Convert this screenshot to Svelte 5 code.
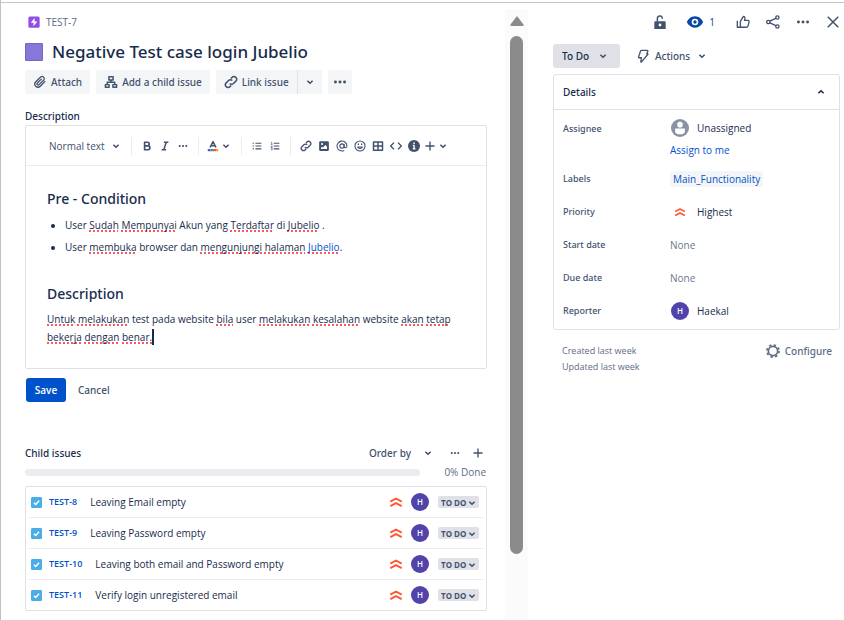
<script>
  const icons = {
    chevron: '<path d="M5 6.5 8 9.5 11 6.5" stroke-width="1.8"/>',
    chevronUp: '<path d="M5 9.5 8 6.5 11 9.5" stroke-width="1.8"/>',
    clip: '<path d="M14 7 8.300 12.900a3.600 3.600 0 0 1-5.100-5.100l5.600-5.600a2.500 2.500 0 0 1 3.500 3.500L7 11a1.300 1.300 0 0 1-1.900-1.900L9.800 4.400"/>',
    tree: '<path d="M5.600 2h4.800v3.600H5.600zM1.600 11h4.200v3H1.600zM10.200 11h4.200v3h-4.200zM8 5.600v2.600M3.700 11V8.300h8.600V11" stroke-width="1.700"/>',
    link: '<path d="M6.500 9.700a3 3 0 0 0 4.300 0l2.700-2.700a3 3 0 0 0-4.300-4.300L7.800 4M9.500 6.300a3 3 0 0 0-4.300 0L2.500 9a3 3 0 0 0 4.300 4.300l1.400-1.300" stroke-width="1.700"/>',
    dots: '<g fill="currentColor" stroke="none"><circle cx="2.8" cy="8" r="1.7"/><circle cx="8" cy="8" r="1.7"/><circle cx="13.2" cy="8" r="1.7"/></g>',
    bold: '<path d="M4.8 3h3.8a2.4 2.4 0 0 1 0 4.8H4.8zM4.8 7.8h4.5a2.6 2.6 0 0 1 0 5.2H4.8z" stroke-width="2.2"/>',
    italic: '<path d="M6.5 3h6M3.5 13h6M9.6 3 6.4 13" stroke-width="2"/>',
    color: '<path d="M4 10 8 2.2 12 10M5.4 7.6h5.2" stroke-width="2"/><g stroke="none"><path fill="#6554c0" d="M1 12h3.5v3H1z"/><path fill="#00a3e0" d="M4.5 12H8v3H4.5z"/><path fill="#ff5630" d="M8 12h4v3H8z"/><path fill="#ff991f" d="M12 12h3v3h-3z"/></g>',
    bullets: '<path d="M5.5 3.5H15M5.5 8H15M5.5 12.5H15M1 3.5h2M1 8h2M1 12.5h2" stroke-width="1.8"/>',
    numbers: '<path d="M6 3.5h9M6 8h9M6 12.5h9" stroke-width="1.8"/><path d="M1.4 2.4 2.8 2v4M1.2 6h3M1.2 9h2.6L1.4 11h2.6L2.8 12.4c2 .2 1 2.4-1.6 1.6" stroke-width="1"/>',
    image: '<path fill="currentColor" stroke="none" fill-rule="evenodd" d="M3 1.500h10A1.500 1.500 0 0 1 14.500 3v10a1.500 1.500 0 0 1-1.500 1.500H3A1.500 1.500 0 0 1 1.500 13V3A1.500 1.500 0 0 1 3 1.500zM5.500 4a1.400 1.400 0 1 0 0 2.800 1.400 1.400 0 0 0 0-2.800zM4 12h8V8.800L9.800 6.500 6.500 10 5.300 9 4 10.300z"/>',
    mention: '<circle cx="8" cy="8" r="2.800"/><path d="M10.800 5.200v3.600c0 2.400 3.800 1.900 3.800-.8A6.600 6.600 0 1 0 11 13.900" stroke-width="1.400"/>',
    emoji: '<circle cx="8" cy="8" r="6.700"/><path d="M4.800 9.300c1 2.600 5.400 2.600 6.400 0z"/><path d="M5.800 4.800v1.700M10.200 4.800v1.700" stroke-width="1.700"/>',
    table: '<path d="M2 2.500h12v11H2zM2 8h12M8 2.500v11" stroke-width="2"/>',
    code: '<path d="M5.300 3.500.9 8l4.400 4.500M10.700 3.500 15.100 8l-4.400 4.500" stroke-width="1.900"/>',
    info: '<circle cx="8" cy="8" r="8" fill="currentColor" stroke="none"/><path d="M8 3.300v1.900M6.500 7.200h1.600v4.500M6.400 11.700h3.400" stroke="#fff" stroke-width="1.900"/>',
    plus: '<path d="M8 2v12M2 8h12" stroke-width="1.800"/>',
    lock: '<path d="M5 7.500V4a2.900 2.900 0 0 1 5.700-.6v1" stroke-width="1.700"/><path fill="currentColor" stroke="none" fill-rule="evenodd" d="M2.500 7h11a1 1 0 0 1 1 1v7a1 1 0 0 1-1 1h-11a1 1 0 0 1-1-1V8a1 1 0 0 1 1-1zM8 9.800a1.600 1.600 0 1 0 0 3.200 1.600 1.600 0 0 0 0-3.200z"/>',
    eye: '<path fill="currentColor" stroke="none" fill-rule="evenodd" d="M8 2.300c4 0 7 3.200 7.900 5.200.1.300.1.700 0 1C15 10.500 12 13.700 8 13.700S1 10.500.1 8.500a1.200 1.200 0 0 1 0-1C1 5.500 4 2.300 8 2.300zM8 4.700a3.300 3.300 0 1 0 0 6.600 3.300 3.300 0 0 0 0-6.600z"/><circle cx="8" cy="8" r="1.700" fill="currentColor" stroke="none"/>',
    thumb: '<path d="M5 14V7.300L8.500 1.500c2.400 0 1.800 2.500 1.200 4.700h3.700c1.200 0 1.800.9 1.500 2l-1.200 4.500c-.3.900-.9 1.300-1.700 1.300zM1.500 6.500V14H5"/>',
    share: '<circle cx="2.700" cy="8" r="1.900"/><circle cx="13" cy="2.900" r="1.900"/><circle cx="13" cy="13.100" r="1.900"/><path d="m4.500 7.100 6.700-3.300M4.500 8.900l6.700 3.300"/>',
    close: '<path d="m2 2 12 12M14 2 2 14" stroke-width="1.700"/>',
    bolt: '<path d="M6.300 1.500h6.500q1 0 .7 1L12.300 5.400h.7q1 0 .4.900L6.300 14.800q-.9.700-.8-.5L6.200 10H3.700q-1 0-.7-1L5.200 2.300q.3-.8 1.100-.8z"/>',
    highest: '<path d="m1.500 7.500 6.500-3.500 6.500 3.500M1.500 12.700 8 9.200l6.500 3.500" stroke="#ff5630" stroke-width="2.200"/>',
    gear: '<circle cx="8" cy="8" r="5.300" stroke-width="1.900"/><circle cx="8" cy="8" r="7" stroke-width="1.800" stroke-dasharray="2.749 2.749" stroke-linecap="butt"/>',
    epic: '<rect x=".5" y=".5" width="15" height="15" rx="2" fill="#904ee2" stroke="none"/><path fill="#fff" stroke="none" d="M8.800 2.800v4.400h3.600L7.300 13.500V9H3.700z"/>',
    task: '<rect width="16" height="16" rx="2" fill="#4bade8" stroke="none"/><path d="m4.300 8.300 2.500 2.500 5-5.300" stroke="#fff" stroke-width="2.200"/>',
    person: '<circle cx="8" cy="8" r="8" fill="#8993a4" stroke="none"/><circle cx="8" cy="5" r="2.500" fill="#fff" stroke="none"/><path fill="#fff" stroke="none" d="M3.700 8.500h8.600V11a4.300 2.500 0 0 1-8.600 0z"/>'
  };

  const inserts = ['link', 'image', 'mention', 'emoji', 'table', 'code', 'info'];

  const children = [
    { key: 'TEST-8', title: 'Leaving Email empty' },
    { key: 'TEST-9', title: 'Leaving Password empty' },
    { key: 'TEST-10', title: 'Leaving both email and Password empty' },
    { key: 'TEST-11', title: 'Verify login unregistered email' }
  ];
</script>

{#snippet icon(name, size = 14)}
  <svg class="icon" width={size} height={size} viewBox="0 0 16 16" fill="none" stroke="currentColor" stroke-width="1.5" stroke-linejoin="round" aria-hidden="true">{@html icons[name]}</svg>
{/snippet}

<div class="page">
  <main>
    <nav class="crumb">{@render icon('epic', 12)}<a href="#issue">TEST-7</a></nav>
    <h1><span class="swatch"></span>Negative Test case login Jubelio</h1>
    <div class="actions">
      <button class="soft">{@render icon('clip')}Attach</button>
      <button class="soft">{@render icon('tree')}Add a child issue</button>
      <div class="split">
        <button class="soft">{@render icon('link')}Link issue</button>
        <button class="soft arrow" aria-label="More link options">{@render icon('chevron')}</button>
      </div>
      <button class="soft square" aria-label="More">{@render icon('dots')}</button>
    </div>

    <h2 id="desc">Description</h2>
    <section class="editor">
      <div class="toolbar">
        <span class="pick style-pick">
          <select aria-label="Text style"><option>Normal text</option></select>
          {@render icon('chevron')}
        </span>
        <div class="group">
          <button aria-label="Bold">{@render icon('bold', 12)}</button>
          <button aria-label="Italic">{@render icon('italic', 12)}</button>
          <button aria-label="More formatting">{@render icon('dots', 10)}</button>
        </div>
        <div class="group tight">
          <button aria-label="Text color">{@render icon('color', 12)}{@render icon('chevron')}</button>
        </div>
        <div class="group">
          <button aria-label="Bullet list">{@render icon('bullets', 10)}</button>
          <button aria-label="Numbered list">{@render icon('numbers', 10)}</button>
        </div>
        <div class="group">
          {#each inserts as name}
            <button aria-label={name}>{@render icon(name, 12)}</button>
          {/each}
          <button class="add" aria-label="Insert">{@render icon('plus', 12)}{@render icon('chevron')}</button>
        </div>
      </div>
      <div class="text" role="textbox" aria-labelledby="desc" aria-multiline="true" contenteditable="true" spellcheck="false" tabindex="0">
        <h3>Pre - Condition</h3>
        <ul>
          <li>User <u>Sudah</u> <u>Mempunyai</u> Akun yang <u>Terdaftar</u> di <u>Jubelio</u> .</li>
          <li>User <u>membuka</u> browser dan <u>mengunjungi</u> <u>halaman</u> <a href="#jubelio"><u>Jubelio</u></a>.</li>
        </ul>
        <h3>Description</h3>
        <p><u>Untuk</u> <u>melakukan</u> test pada website <u>bila</u> user <u>melakukan</u> <u>kesalahan</u> website <u>akan</u> <u>tetap</u> <u>bekerja</u> <u>dengan</u> <u>benar.</u><span class="caret"></span></p>
      </div>
    </section>
    <div class="submit">
      <button class="save">Save</button>
      <button class="cancel">Cancel</button>
    </div>

    <header class="child-head">
      <h2>Child issues</h2>
      <span class="pick order">
        <select aria-label="Order"><option>Order by</option></select>
        {@render icon('chevron')}
      </span>
      <button aria-label="Child issue options">{@render icon('dots', 10)}</button>
      <button aria-label="Create child issue">{@render icon('plus', 12)}</button>
    </header>
    <div class="progress"><div class="bar" role="progressbar" aria-label="Done" aria-valuenow="0"></div><span>0% Done</span></div>
    <ul class="children">
      {#each children as item}
        <li>
          {@render icon('task', 11)}
          <a href={'#' + item.key}>{item.key}</a>
          <span class="name">{item.title}</span>
          {@render icon('highest')}
          <span class="avatar">H</span>
          <span class="pick status">
            <select aria-label={'Status of ' + item.key}><option>TO DO</option></select>
            {@render icon('chevron')}
          </span>
        </li>
      {/each}
    </ul>
  </main>

  <div class="scroll" aria-hidden="true">
    <svg width="14" height="10" viewBox="0 0 14 10"><path fill="#8b8b8b" d="M7 0 13.500 8.500Q14 10 12.500 10H1.500Q0 10 .5 8.500z"/></svg>
    <div class="thumb"></div>
  </div>

  <aside>
    <div class="tools">
      <button aria-label="Unlock">{@render icon('lock')}</button>
      <button class="watch" aria-label="Watchers">{@render icon('eye', 16)}<span>1</span></button>
      <button aria-label="Vote">{@render icon('thumb')}</button>
      <button aria-label="Share">{@render icon('share')}</button>
      <button aria-label="More">{@render icon('dots')}</button>
      <button aria-label="Close">{@render icon('close')}</button>
    </div>
    <div class="state">
      <span class="pick todo">
        <select aria-label="Status"><option>To Do</option></select>
        {@render icon('chevron')}
      </span>
      <button>{@render icon('bolt')}<span>Actions</span>{@render icon('chevron')}</button>
    </div>
    <section class="details">
      <button class="details-head">Details{@render icon('chevronUp')}</button>
      <dl>
        <dt>Assignee</dt>
        <dd class="tall"><span class="who">{@render icon('person', 18)}Unassigned</span><a href="#assign">Assign to me</a></dd>
        <dt>Labels</dt>
        <dd><a class="tag" href="#label">Main_Functionality</a></dd>
        <dt>Priority</dt>
        <dd><span class="who"><span class="slot">{@render icon('highest', 12)}</span>Highest</span></dd>
        <dt>Start date</dt>
        <dd class="none">None</dd>
        <dt>Due date</dt>
        <dd class="none">None</dd>
        <dt>Reporter</dt>
        <dd><span class="who"><span class="avatar">H</span>Haekal</span></dd>
      </dl>
    </section>
    <footer>
      <div>Created last week<br />Updated last week</div>
      <button>{@render icon('gear')}Configure</button>
    </footer>
  </aside>
</div>

<style>
  :global(body) { background: #fff; }
  .page {
    display: grid;
    grid-template-columns: minmax(0, 504fr) 23px minmax(0, 316fr);
    min-height: 100vh;
    box-sizing: border-box;
    padding-top: 2px;
    font: 10px/16px "Open Sans", "Noto Sans", sans-serif;
    color: #172b4d;
    background: linear-gradient(#c6c6d0, #c6c6d0) 0 2px / 100% 1px no-repeat, #fff;
    border-left: 1px solid #c1c1c1;
  }
  .page * { box-sizing: border-box; }
  h1, h2, h3, p, ul, dl, dd { margin: 0; padding: 0; }
  ul { list-style: none; }
  h2 { font-size: 10px; line-height: 16px; }
  a { color: #0052cc; text-decoration: none; }
  .icon { display: block; flex: none; }
  button, select { font: inherit; color: #42526e; background: none; border: 0; margin: 0; padding: 0; border-radius: 3px; }
  button { display: flex; align-items: center; justify-content: center; cursor: pointer; }
  select { appearance: none; width: 100%; height: 100%; }
  h1, h2, h3, dt, .soft, .cancel, .order, .todo, .state button, .details-head, footer button { font-family: "Noto Sans", sans-serif; font-weight: 500; }
  .pick { display: inline-grid; align-items: center; color: #42526e; }
  .pick > :global(*) { grid-area: 1 / 1; }
  .pick > :global(svg) { justify-self: end; pointer-events: none; }

  main { padding: 12px 18px 9px 24px; min-width: 0; }
  .crumb { display: flex; align-items: center; gap: 6px; height: 16px; padding-left: 3px; }
  .crumb a { color: #5e6c84; }
  h1 { display: flex; align-items: center; gap: 9px; margin: 10px 0 6px; font-size: 17px; line-height: 24px; }
  .swatch { width: 18px; height: 18px; background: #8777d9; border: 1px solid #7566c4; border-radius: 1px; }
  .actions { display: flex; gap: 6px; margin-bottom: 14px; }
  .soft { height: 24px; padding: 0 8px; gap: 4px; background: #f4f5f7; white-space: nowrap; }
  .split { display: flex; gap: 1px; background: #dfe1e6; }
  .split .soft { border-radius: 0; }
  .arrow, .square { width: 24px; padding: 0; }

  .editor { margin-top: 1px; border: 1px solid #dfe1e6; border-radius: 2px; }
  .toolbar { display: flex; align-items: center; height: 40px; padding-left: 23px; border-bottom: 1px solid #ebecf0; }
  .toolbar .style-pick { width: 74px; margin-right: 8px; }
  .group { display: flex; align-items: center; height: 18px; padding: 0 6px; border-left: 1px solid #ebecf0; }
  .group button { width: 18px; height: 18px; }
  .group.tight { padding: 0 7px; }
  .group.tight button { width: 28px; }
  .group .add { width: 28px; }
  .text { padding: 22px 21px; outline: 0; line-height: 18px; }
  h3 { font-size: 14px; line-height: 22px; }
  .text ul { padding-left: 18px; margin: 4px 0 25px; list-style: disc; }
  .text li { line-height: 22px; }
  .text p { margin-top: 5px; }
  u { text-decoration: underline dotted #f25c62 2px; text-underline-offset: 1px; text-decoration-skip-ink: none; }
  .caret { border-left: 2px solid #172b4d; padding: 1px 0; }
  .submit { display: flex; gap: 12px; margin: 9px 0 43px 1px; }
  .save { height: 24px; width: 40px; background: #0052cc; color: #fff; font-weight: 600; }

  .child-head { display: flex; align-items: center; gap: 5px; }
  .child-head h2 { flex: 1; }
  .child-head .order { width: 66px; margin-right: 6px; }
  .child-head button { width: 18px; height: 16px; }
  .progress { display: flex; align-items: center; justify-content: space-between; gap: 24px; margin: 3px 0 6px; color: #5e6c84; padding-right: 1px; }
  .bar { flex: 1; height: 7px; border-radius: 4px; background: #ebecf0; }
  .children { border: 1px solid #dfe1e6; border-radius: 2px; padding: 0 3px; }
  .children li { display: flex; align-items: center; height: 31px; padding: 0 4px 0 2px; border-bottom: 1px solid #ebecf0; }
  .children li:last-child { border: 0; height: 30px; }
  .children a { margin: 0 13px 0 7px; font-size: 9px; font-weight: 600; }
  .name { flex: 1; }
  .avatar { display: grid; place-items: center; width: 18px; height: 18px; border-radius: 50%; background: #5243aa; color: #fff; font-size: 8px; line-height: 8px; font-weight: 600; }
  .children .avatar { margin: 0 9px 0 8px; }
  .status { width: 41px; height: 12px; background: #dfe1e6; border-radius: 2px; font-size: 8px; line-height: 12px; font-weight: 700; }
  .status select { padding-left: 3px; }

  .scroll { margin-top: 7px; background: #fbfbfb; display: flex; flex-direction: column; align-items: center; padding-top: 7px; }
  .thumb { width: 13px; flex: 0 1 518px; margin-top: 10px; border-radius: 7px; background: #8b8b8b; }

  aside { padding: 11px 4px 0 25px; min-width: 0; }
  .tools { display: flex; align-items: center; justify-content: flex-end; gap: 16px; height: 18px; }
  .tools .watch { color: #0747a6; gap: 6px; margin: 0 5px 0 4px; }
  .state { display: flex; align-items: center; gap: 16px; margin: 13px 0 6px; }
  .state .todo { width: 67px; height: 24px; background: #dfe1e6; border-radius: 3px; }
  .todo select { padding-left: 9px; color: #172b4d; }
  .todo > :global(svg) { margin-right: 10px; }
  .state button { gap: 5px; }
  .details { border: 1px solid #dfe1e6; border-radius: 3px; }
  .details-head { width: 100%; height: 35px; justify-content: space-between; padding: 0 11px 0 9px; color: #172b4d; border-bottom: 1px solid #dfe1e6; border-radius: 0; }
  dl { display: grid; grid-template-columns: 107px 1fr; padding: 2px 0 2px 9px; }
  dt { font-size: 9px; line-height: 33px; color: #42526e; }
  dd { display: flex; align-items: center; height: 33px; }
  dd.tall { flex-direction: column; align-items: flex-start; height: 50px; padding-top: 7px; gap: 5px; }
  .who { display: flex; align-items: center; gap: 8px; padding-left: 1px; }
  .who .slot { display: grid; place-items: center; width: 18px; }
  .tag { background: #f4f5f7; border-radius: 3px; padding: 0 3px; }
  .none { color: #6b778c; }
  footer { display: flex; align-items: flex-start; justify-content: space-between; padding: 13px 8px 0 9px; font-size: 9px; color: #5e6c84; }
  footer button { gap: 5px; font-size: 10px; color: #5e6c84; }
</style>
